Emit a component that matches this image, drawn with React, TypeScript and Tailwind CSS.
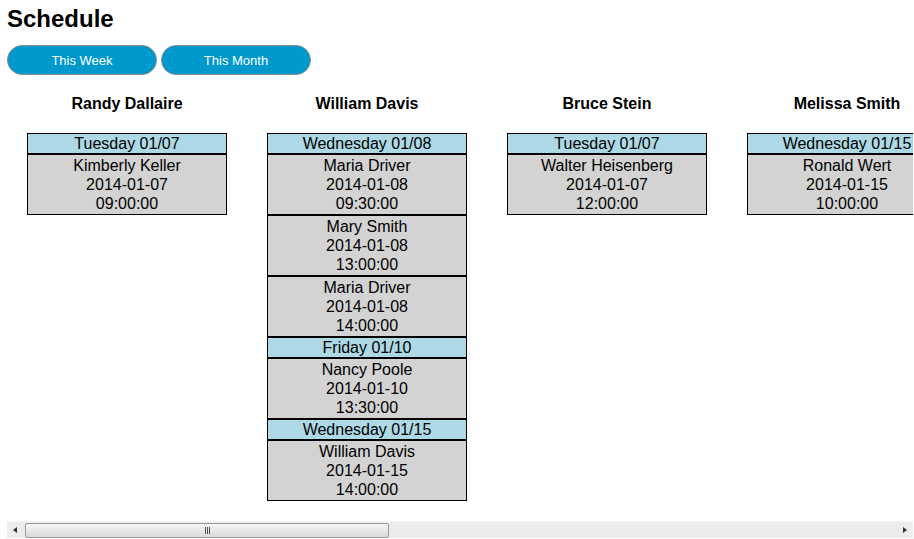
import React from 'react';

interface Appointment {
  client: string;
  date: string;
  time: string;
}

interface DayGroup {
  label: string;
  items: Appointment[];
}

interface Staff {
  name: string;
  days: DayGroup[];
}

const schedule: Staff[] = [
  {
    name: 'Randy Dallaire',
    days: [{ label: 'Tuesday 01/07', items: [{ client: 'Kimberly Keller', date: '2014-01-07', time: '09:00:00' }] }],
  },
  {
    name: 'William Davis',
    days: [
      {
        label: 'Wednesday 01/08',
        items: [
          { client: 'Maria Driver', date: '2014-01-08', time: '09:30:00' },
          { client: 'Mary Smith', date: '2014-01-08', time: '13:00:00' },
          { client: 'Maria Driver', date: '2014-01-08', time: '14:00:00' },
        ],
      },
      { label: 'Friday 01/10', items: [{ client: 'Nancy Poole', date: '2014-01-10', time: '13:30:00' }] },
      { label: 'Wednesday 01/15', items: [{ client: 'William Davis', date: '2014-01-15', time: '14:00:00' }] },
    ],
  },
  {
    name: 'Bruce Stein',
    days: [{ label: 'Tuesday 01/07', items: [{ client: 'Walter Heisenberg', date: '2014-01-07', time: '12:00:00' }] }],
  },
  {
    name: 'Melissa Smith',
    days: [{ label: 'Wednesday 01/15', items: [{ client: 'Ronald Wert', date: '2014-01-15', time: '10:00:00' }] }],
  },
  {
    name: 'John Parker',
    days: [{ label: 'Thursday 01/09', items: [{ client: 'Linda Brown', date: '2014-01-09', time: '11:00:00' }] }],
  },
];

function StaffColumn({ staff }: { staff: Staff }) {
  return (
    <div className="w-[240px] shrink-0 flex flex-col items-center">
      <div className="mt-[20px] mb-[20px] text-[16px] leading-[18px] font-bold">{staff.name}</div>
      <div className="w-[200px]">
        {staff.days.map((day, i) => (
          <div key={i}>
            <div className="border border-black bg-[#add8e6] text-center text-[16px] leading-[19px] whitespace-nowrap">
              {day.label}
            </div>
            {day.items.map((item, j) => (
              <div key={j} className="border border-black bg-[#d3d3d3] text-center text-[16px] leading-[19px] py-px">
                <div>{item.client}</div>
                <div>{item.date}</div>
                <div>{item.time}</div>
              </div>
            ))}
          </div>
        ))}
      </div>
    </div>
  );
}

function FakeScrollbar() {
  return (
    <div className="h-[17px] bg-[#ececec] border-t border-[#f6f6f6] flex items-center relative">
      <div className="w-[16px] h-full flex items-center justify-center">
        <div className="w-0 h-0 border-y-[3px] border-y-transparent border-r-[4px] border-r-[#333]" />
      </div>
      <div className="w-[364px] ml-[2px] h-[15px] rounded-[2px] border border-[#9a9a9a] bg-gradient-to-b from-[#f7f7f7] to-[#d9d9d9] flex items-center justify-center">
        <div className="flex gap-[1px] ml-[1px]">
          <div className="w-px h-[7px] bg-[#555]" />
          <div className="w-px h-[7px] bg-[#555]" />
          <div className="w-px h-[7px] bg-[#555]" />
        </div>
      </div>
      <div className="flex-1" />
      <div className="w-[16px] h-full flex items-center justify-center">
        <div className="w-0 h-0 border-y-[3px] border-y-transparent border-l-[4px] border-l-[#333]" />
      </div>
    </div>
  );
}

export default function App() {
  return (
    <div className="pl-[7px] pr-px text-black" style={{ fontFamily: '"Liberation Sans", Arial, sans-serif' }}>
      <h1 className="pt-[5px] text-[24px] leading-[28px] font-bold">Schedule</h1>
      <div className="mt-[12px] flex gap-[4px]">
        <button className="w-[150px] h-[30px] pt-px rounded-full border border-[#8c8c8c] bg-[#0099cc] text-white text-[13px]">
          This Week
        </button>
        <button className="w-[150px] h-[30px] pt-px rounded-full border border-[#8c8c8c] bg-[#0099cc] text-white text-[13px]">
          This Month
        </button>
      </div>
      <div className="overflow-hidden">
        <div className="flex">
          {schedule.map((s) => (
            <StaffColumn key={s.name} staff={s} />
          ))}
        </div>
        <div className="mt-[20px]">
          <FakeScrollbar />
        </div>
      </div>
    </div>
  );
}
